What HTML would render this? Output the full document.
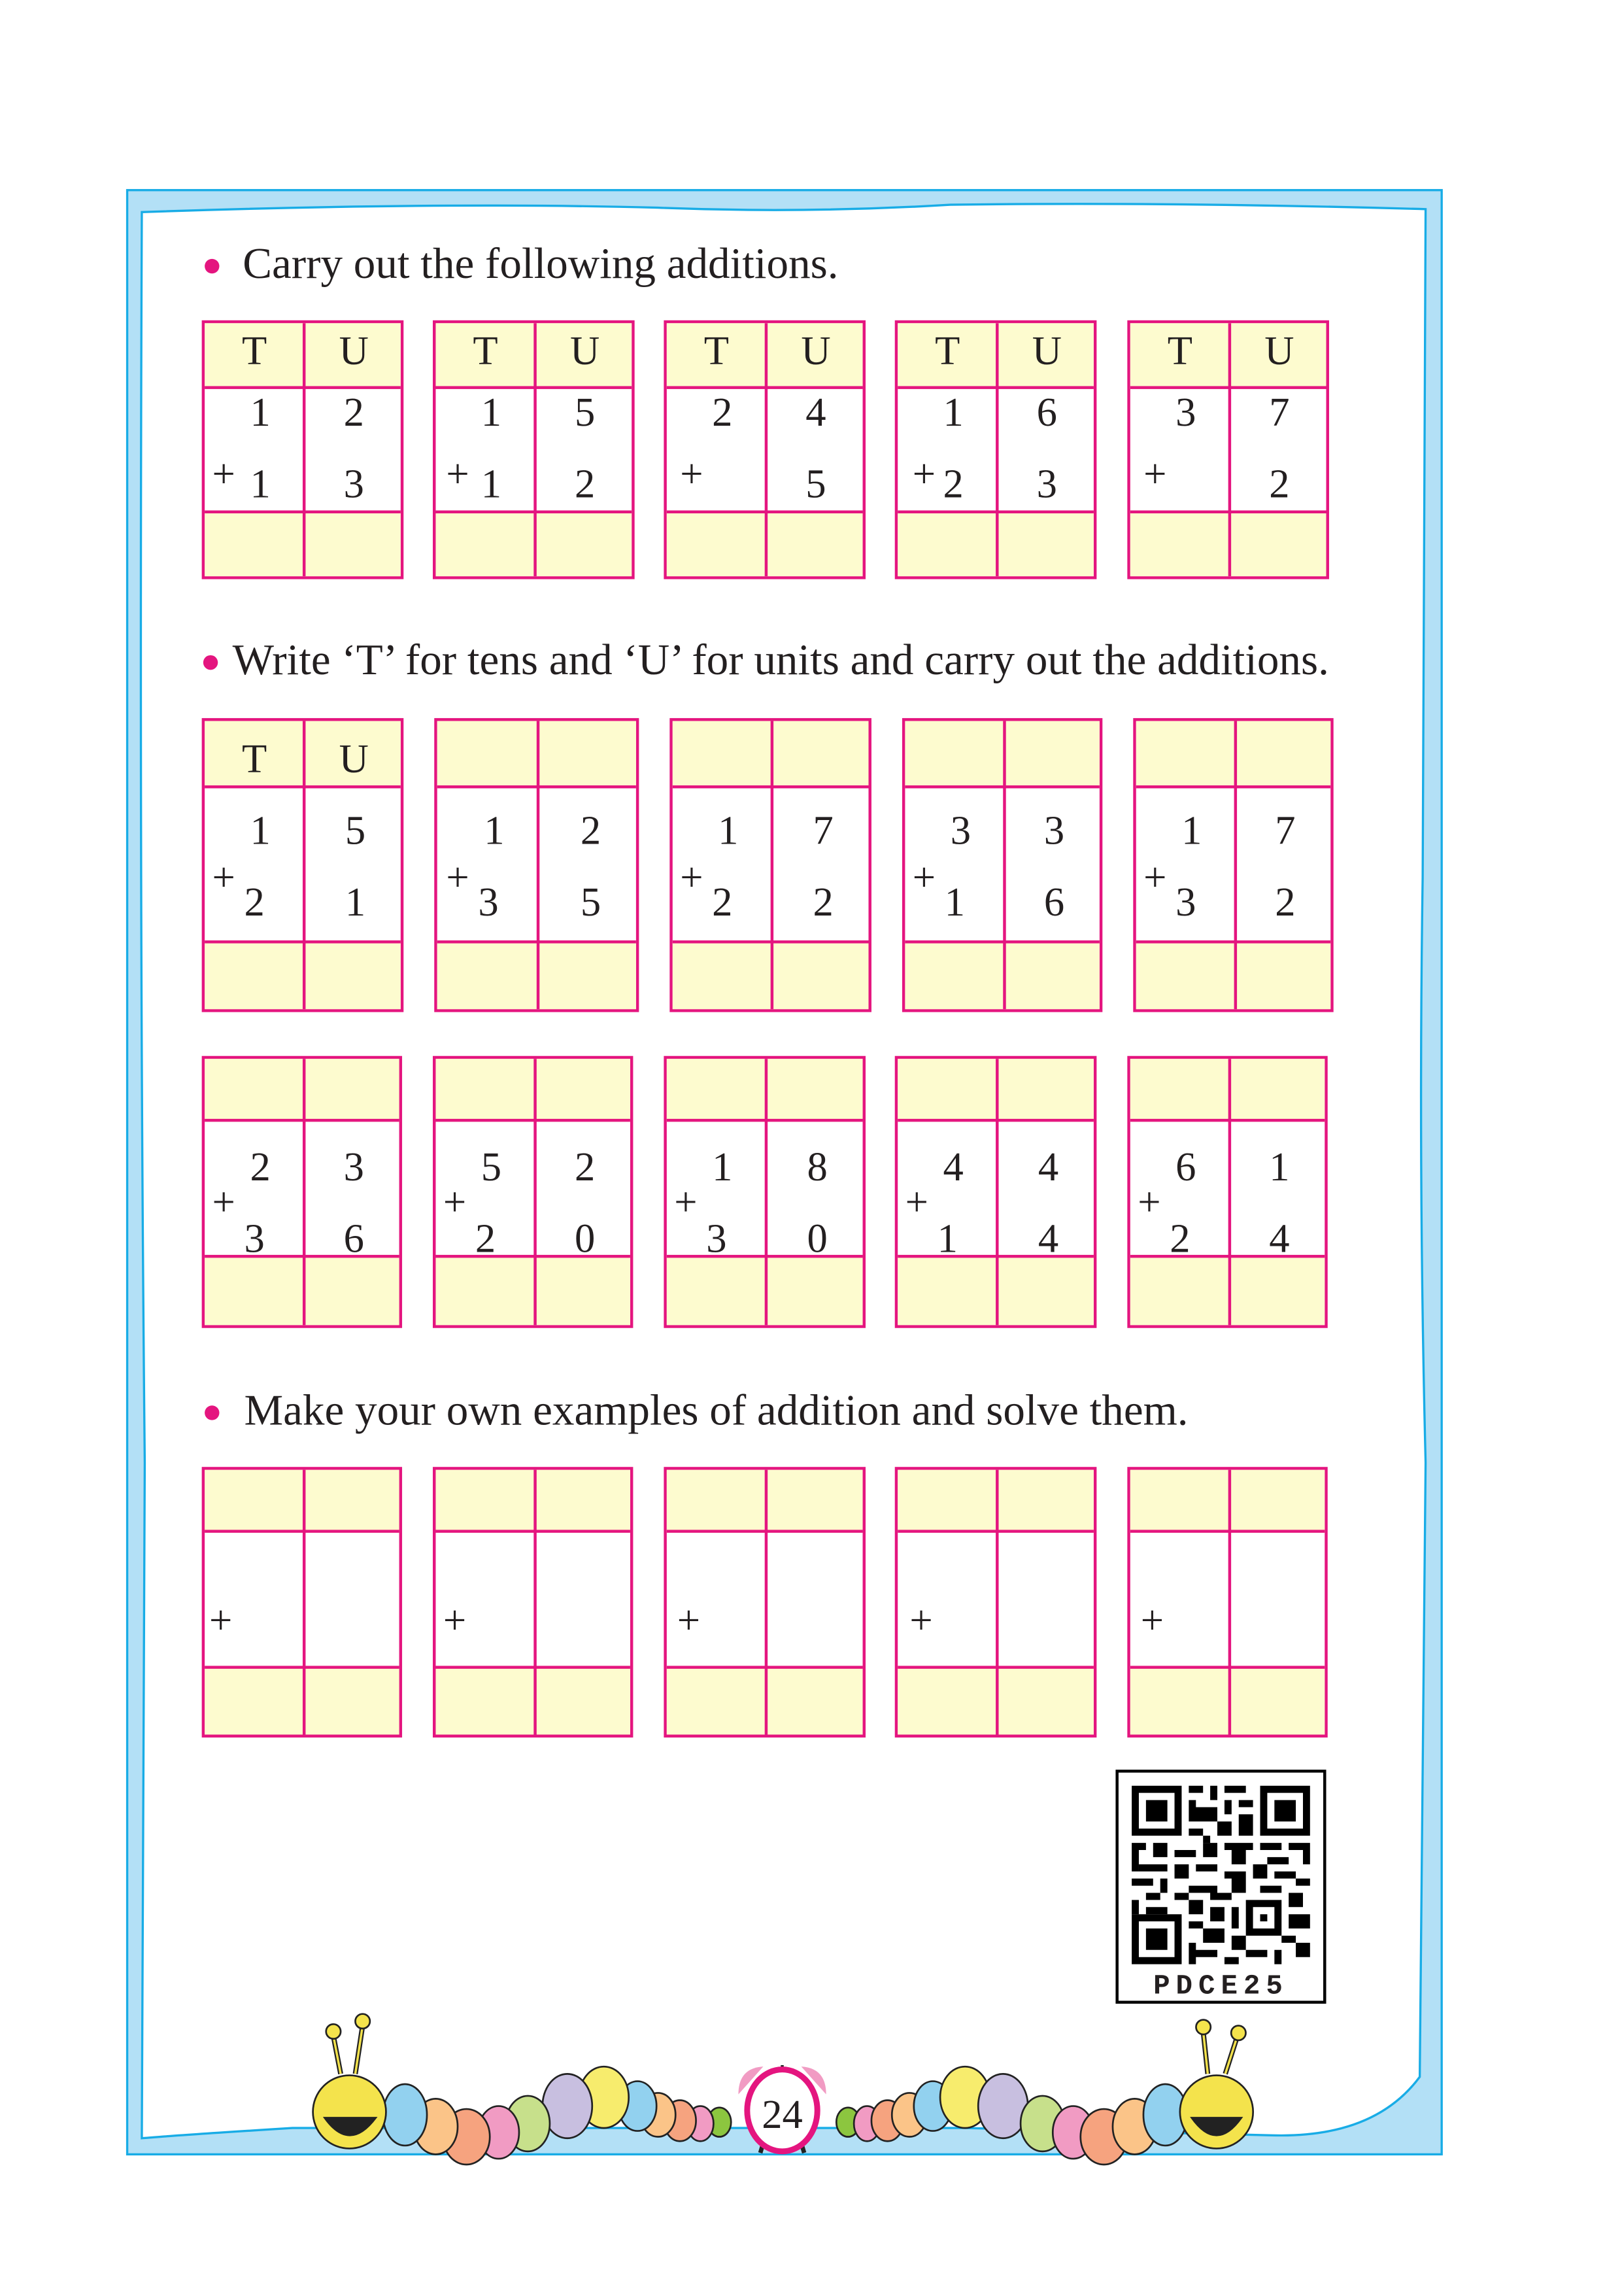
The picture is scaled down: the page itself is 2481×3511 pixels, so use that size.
<!DOCTYPE html>
<html><head><meta charset="utf-8"><style>
html,body{margin:0;padding:0;background:#fff;}
body{width:2481px;height:3508px;overflow:hidden;position:relative;}
#w{position:absolute;left:0;top:0;width:1110px;height:1570px;transform:scale(2.2365,2.2365);transform-origin:0 0;font-family:"Liberation Serif",serif;color:#231f20;}
.tb{position:absolute;box-sizing:border-box;border:2.2px solid #e4157f;background:#fff;}
.hd{position:absolute;left:0;right:0;top:0;background:#fdfbcf;border-bottom:2.2px solid #e4157f;}
.ft{position:absolute;left:0;right:0;bottom:0;background:#fdfbcf;border-top:2.2px solid #e4157f;}
.vl{position:absolute;left:50%;top:0;bottom:0;border-left:2.2px solid #e4157f;}
.n{position:absolute;font-size:28px;line-height:1;transform:translate(-50%,-50%);}
.p{position:absolute;font-size:28px;line-height:1;transform:translate(-50%,-50%);}
.b{position:absolute;width:10px;height:10px;border-radius:50%;background:#e4157f;}
.h{position:absolute;font-size:30px;line-height:1;white-space:nowrap;transform:translateY(-50%);}
</style></head><body><div id="w">

<svg style="position:absolute;left:0;top:0" width="1100" height="1556">
<rect x="87" y="130" width="899" height="1343" fill="#b3e0f6" stroke="#18ace6" stroke-width="1.5"/>
<path d="M97 145 Q300 138 450 142 Q550 146 650 140 Q800 138 975 143 L973 600 Q970 800 975 1000 L971 1420 Q940 1462 870 1460 L660 1455 L200 1455 Q120 1460 97 1462 L99 1000 Q95 600 97 145 Z" fill="#fff" stroke="#18ace6" stroke-width="1.5"/>
</svg>

<div class="b" style="left:140px;top:177px"></div>
<div class="h" style="left:166px;top:181px">Carry out the following additions.</div>
<div class="b" style="left:139px;top:448px"></div>
<div class="h" style="left:159px;top:452px">Write ‘T’ for tens and ‘U’ for units and carry out the additions.</div>
<div class="b" style="left:140px;top:961px"></div>
<div class="h" style="left:167px;top:965px">Make your own examples of addition and solve them.</div>

<!-- Row 1 -->
<div class="tb" style="left:138px;top:219px;width:138px;height:177px"><div class="hd" style="height:43px"></div><div class="ft" style="height:43px"></div><div class="vl"></div>
<span class="n" style="left:34px;top:20px">T</span><span class="n" style="left:102px;top:20px">U</span>
<span class="n" style="left:38px;top:62px">1</span><span class="n" style="left:102px;top:62px">2</span>
<span class="p" style="left:13px;top:104px">+</span><span class="n" style="left:38px;top:111px">1</span><span class="n" style="left:102px;top:111px">3</span></div>
<div class="tb" style="left:296px;top:219px;width:138px;height:177px"><div class="hd" style="height:43px"></div><div class="ft" style="height:43px"></div><div class="vl"></div>
<span class="n" style="left:34px;top:20px">T</span><span class="n" style="left:102px;top:20px">U</span>
<span class="n" style="left:38px;top:62px">1</span><span class="n" style="left:102px;top:62px">5</span>
<span class="p" style="left:15px;top:104px">+</span><span class="n" style="left:38px;top:111px">1</span><span class="n" style="left:102px;top:111px">2</span></div>
<div class="tb" style="left:454px;top:219px;width:138px;height:177px"><div class="hd" style="height:43px"></div><div class="ft" style="height:43px"></div><div class="vl"></div>
<span class="n" style="left:34px;top:20px">T</span><span class="n" style="left:102px;top:20px">U</span>
<span class="n" style="left:38px;top:62px">2</span><span class="n" style="left:102px;top:62px">4</span>
<span class="p" style="left:17px;top:104px">+</span><span class="n" style="left:102px;top:111px">5</span></div>
<div class="tb" style="left:612px;top:219px;width:138px;height:177px"><div class="hd" style="height:43px"></div><div class="ft" style="height:43px"></div><div class="vl"></div>
<span class="n" style="left:34px;top:20px">T</span><span class="n" style="left:102px;top:20px">U</span>
<span class="n" style="left:38px;top:62px">1</span><span class="n" style="left:102px;top:62px">6</span>
<span class="p" style="left:18px;top:104px">+</span><span class="n" style="left:38px;top:111px">2</span><span class="n" style="left:102px;top:111px">3</span></div>
<div class="tb" style="left:771px;top:219px;width:138px;height:177px"><div class="hd" style="height:43px"></div><div class="ft" style="height:43px"></div><div class="vl"></div>
<span class="n" style="left:34px;top:20px">T</span><span class="n" style="left:102px;top:20px">U</span>
<span class="n" style="left:38px;top:62px">3</span><span class="n" style="left:102px;top:62px">7</span>
<span class="p" style="left:17px;top:104px">+</span><span class="n" style="left:102px;top:111px">2</span></div>

<!-- Row 2 -->
<div class="tb" style="left:138px;top:491px;width:138px;height:201px"><div class="hd" style="height:44px"></div><div class="ft" style="height:45px"></div><div class="vl"></div>
<span class="n" style="left:34px;top:27px">T</span><span class="n" style="left:102px;top:27px">U</span>
<span class="n" style="left:38px;top:76px">1</span><span class="n" style="left:103px;top:76px">5</span>
<span class="p" style="left:13px;top:108px">+</span><span class="n" style="left:34px;top:125px">2</span><span class="n" style="left:103px;top:125px">1</span></div>
<div class="tb" style="left:297px;top:491px;width:140px;height:201px"><div class="hd" style="height:44px"></div><div class="ft" style="height:45px"></div><div class="vl"></div>
<span class="n" style="left:39px;top:76px">1</span><span class="n" style="left:105px;top:76px">2</span>
<span class="p" style="left:14px;top:108px">+</span><span class="n" style="left:35px;top:125px">3</span><span class="n" style="left:105px;top:125px">5</span></div>
<div class="tb" style="left:458px;top:491px;width:138px;height:201px"><div class="hd" style="height:44px"></div><div class="ft" style="height:45px"></div><div class="vl"></div>
<span class="n" style="left:38px;top:76px">1</span><span class="n" style="left:103px;top:76px">7</span>
<span class="p" style="left:13px;top:108px">+</span><span class="n" style="left:34px;top:125px">2</span><span class="n" style="left:103px;top:125px">2</span></div>
<div class="tb" style="left:617px;top:491px;width:137px;height:201px"><div class="hd" style="height:44px"></div><div class="ft" style="height:45px"></div><div class="vl"></div>
<span class="n" style="left:38px;top:76px">3</span><span class="n" style="left:102px;top:76px">3</span>
<span class="p" style="left:13px;top:108px">+</span><span class="n" style="left:34px;top:125px">1</span><span class="n" style="left:102px;top:125px">6</span></div>
<div class="tb" style="left:775px;top:491px;width:137px;height:201px"><div class="hd" style="height:44px"></div><div class="ft" style="height:45px"></div><div class="vl"></div>
<span class="n" style="left:38px;top:76px">1</span><span class="n" style="left:102px;top:76px">7</span>
<span class="p" style="left:13px;top:108px">+</span><span class="n" style="left:34px;top:125px">3</span><span class="n" style="left:102px;top:125px">2</span></div>

<!-- Row 3 -->
<div class="tb" style="left:138px;top:722px;width:137px;height:186px"><div class="hd" style="height:41px"></div><div class="ft" style="height:46px"></div><div class="vl"></div>
<span class="n" style="left:38px;top:75px">2</span><span class="n" style="left:102px;top:75px">3</span>
<span class="p" style="left:13px;top:99px">+</span><span class="n" style="left:34px;top:124px">3</span><span class="n" style="left:102px;top:124px">6</span></div>
<div class="tb" style="left:296px;top:722px;width:137px;height:186px"><div class="hd" style="height:41px"></div><div class="ft" style="height:46px"></div><div class="vl"></div>
<span class="n" style="left:38px;top:75px">5</span><span class="n" style="left:102px;top:75px">2</span>
<span class="p" style="left:13px;top:99px">+</span><span class="n" style="left:34px;top:124px">2</span><span class="n" style="left:102px;top:124px">0</span></div>
<div class="tb" style="left:454px;top:722px;width:138px;height:186px"><div class="hd" style="height:41px"></div><div class="ft" style="height:46px"></div><div class="vl"></div>
<span class="n" style="left:38px;top:75px">1</span><span class="n" style="left:103px;top:75px">8</span>
<span class="p" style="left:13px;top:99px">+</span><span class="n" style="left:34px;top:124px">3</span><span class="n" style="left:103px;top:124px">0</span></div>
<div class="tb" style="left:612px;top:722px;width:138px;height:186px"><div class="hd" style="height:41px"></div><div class="ft" style="height:46px"></div><div class="vl"></div>
<span class="n" style="left:38px;top:75px">4</span><span class="n" style="left:103px;top:75px">4</span>
<span class="p" style="left:13px;top:99px">+</span><span class="n" style="left:34px;top:124px">1</span><span class="n" style="left:103px;top:124px">4</span></div>
<div class="tb" style="left:771px;top:722px;width:137px;height:186px"><div class="hd" style="height:41px"></div><div class="ft" style="height:46px"></div><div class="vl"></div>
<span class="n" style="left:38px;top:75px">6</span><span class="n" style="left:102px;top:75px">1</span>
<span class="p" style="left:13px;top:99px">+</span><span class="n" style="left:34px;top:124px">2</span><span class="n" style="left:102px;top:124px">4</span></div>

<!-- Row 4 -->
<div class="tb" style="left:138px;top:1003px;width:137px;height:185px"><div class="hd" style="height:41px"></div><div class="ft" style="height:45px"></div><div class="vl"></div><span class="p" style="left:11px;top:104px">+</span></div>
<div class="tb" style="left:296px;top:1003px;width:137px;height:185px"><div class="hd" style="height:41px"></div><div class="ft" style="height:45px"></div><div class="vl"></div><span class="p" style="left:13px;top:104px">+</span></div>
<div class="tb" style="left:454px;top:1003px;width:138px;height:185px"><div class="hd" style="height:41px"></div><div class="ft" style="height:45px"></div><div class="vl"></div><span class="p" style="left:15px;top:104px">+</span></div>
<div class="tb" style="left:612px;top:1003px;width:138px;height:185px"><div class="hd" style="height:41px"></div><div class="ft" style="height:45px"></div><div class="vl"></div><span class="p" style="left:16px;top:104px">+</span></div>
<div class="tb" style="left:771px;top:1003px;width:137px;height:185px"><div class="hd" style="height:41px"></div><div class="ft" style="height:45px"></div><div class="vl"></div><span class="p" style="left:15px;top:104px">+</span></div>

<!-- QR -->
<div style="position:absolute;left:763px;top:1210px;width:144px;height:160px;box-sizing:border-box;border:2px solid #000;background:#fff"></div>
<svg style="position:absolute;left:774px;top:1220px" width="122" height="124" viewBox="0 0 25 25">
<g fill="#000">
<path d="M0 0h7v7h-7zM1 1v5h5v-5zM2 2h3v3h-3z" fill-rule="evenodd"/>
<path d="M18 0h7v7h-7zM19 1v5h5v-5zM20 2h3v3h-3z" fill-rule="evenodd"/>
<path d="M0 18h7v7h-7zM1 19v5h5v-5zM2 20h3v3h-3z" fill-rule="evenodd"/>
<path d="M16 16h5v5h-5zM17 17v3h3v-3zM18 18h1v1h-1z" fill-rule="evenodd"/>
<path d="M8 0h2v1h-2zM11 0h1v2h-1zM13 0h3v1h-3zM8 2h1v3h-1zM9 3h3v2h-3zM13 2h1v2h-1zM15 2h2v1h-2zM12 5h2v2h-2zM15 4h2v3h-2zM8 6h2v1h-2zM10 7h1v1h-1z"/>
<path d="M0 8h2v1h-2zM0 9h1v3h-1zM3 8h2v2h-2zM6 9h3v1h-3zM10 8h2v2h-2zM13 8h4v1h-4zM14 9h2v2h-2zM18 8h3v1h-3zM22 8h3v1h-3zM24 9h1v2h-1zM19 10h3v1h-3z"/>
<path d="M1 11h4v1h-4zM6 11h2v2h-2zM9 11h3v1h-3zM13 12h3v1h-3zM17 11h2v2h-2zM20 12h3v1h-3zM0 13h3v1h-3zM4 13h1v2h-1zM8 14h4v1h-4zM14 13h2v2h-2zM18 14h3v1h-3zM23 13h2v1h-2zM2 15h2v1h-2zM6 15h2v1h-2zM11 15h3v1h-3zM22 15h2v2h-2z"/>
<path d="M0 16h1v2h-1zM2 17h3v1h-3zM8 16h2v2h-2zM11 17h2v2h-2zM14 17h1v3h-1zM22 18h3v2h-3zM8 19h2v1h-2zM10 20h3v2h-3zM8 22h1v3h-1zM9 23h3v1h-3zM14 21h2v2h-2zM16 23h3v1h-3zM21 21h2v1h-2zM23 22h2v2h-2zM20 23h1v2h-1zM13 24h2v1h-2z"/>
</g></svg>
<div style="position:absolute;left:763px;top:1346px;width:144px;text-align:center;font-family:'Liberation Mono',monospace;font-weight:bold;font-size:19px;letter-spacing:4px;line-height:24px">PDCE25</div>

<!-- caterpillars & clock -->
<svg style="position:absolute;left:0;top:0" width="1100" height="1556">
<g stroke="#222" stroke-width="1.2">
<ellipse cx="492" cy="1451" rx="8" ry="10" fill="#8cc63f"/>
<ellipse cx="479" cy="1452" rx="9" ry="12" fill="#f19bc3"/>
<ellipse cx="465" cy="1450" rx="11" ry="14" fill="#f6a37f"/>
<ellipse cx="450" cy="1446" rx="12" ry="15" fill="#fbc488"/>
<ellipse cx="436" cy="1440" rx="13" ry="17" fill="#92d1ef"/>
<ellipse cx="413" cy="1434" rx="17" ry="21" fill="#f7ec6d"/>
<ellipse cx="388" cy="1440" rx="17" ry="22" fill="#c8bfe0"/>
<ellipse cx="361" cy="1452" rx="15" ry="19" fill="#c7e08b"/>
<ellipse cx="341" cy="1458" rx="14" ry="18" fill="#f19bc3"/>
<ellipse cx="319" cy="1461" rx="16" ry="19" fill="#f6a37f"/>
<ellipse cx="298" cy="1454" rx="15" ry="19" fill="#fbc488"/>
<ellipse cx="277" cy="1446" rx="15" ry="21" fill="#92d1ef"/>
<path d="M233 1418 L228 1392 M243 1418 L248 1385" stroke="#222" stroke-width="3.5" fill="none"/>
<path d="M233 1418 L228 1392 M243 1418 L248 1385" stroke="#f4e34c" stroke-width="1.5" fill="none"/>
<circle cx="228" cy="1389" r="5" fill="#f4e34c"/><circle cx="248" cy="1382" r="5" fill="#f4e34c"/>
<ellipse cx="239" cy="1444" rx="25" ry="25" fill="#f4e34c"/>
<path d="M222 1448 Q239 1472 257 1448 Z" fill="#222"/>
<ellipse cx="580" cy="1451" rx="8" ry="10" fill="#8cc63f"/>
<ellipse cx="593" cy="1452" rx="9" ry="12" fill="#f19bc3"/>
<ellipse cx="607" cy="1450" rx="11" ry="14" fill="#f6a37f"/>
<ellipse cx="622" cy="1446" rx="12" ry="15" fill="#fbc488"/>
<ellipse cx="638" cy="1440" rx="13" ry="17" fill="#92d1ef"/>
<ellipse cx="660" cy="1434" rx="17" ry="21" fill="#f7ec6d"/>
<ellipse cx="686" cy="1440" rx="17" ry="22" fill="#c8bfe0"/>
<ellipse cx="713" cy="1452" rx="15" ry="19" fill="#c7e08b"/>
<ellipse cx="734" cy="1458" rx="14" ry="18" fill="#f19bc3"/>
<ellipse cx="755" cy="1461" rx="16" ry="19" fill="#f6a37f"/>
<ellipse cx="776" cy="1454" rx="15" ry="19" fill="#fbc488"/>
<ellipse cx="797" cy="1446" rx="15" ry="21" fill="#92d1ef"/>
<path d="M826 1418 L823 1390 M838 1418 L846 1393" stroke="#222" stroke-width="3.5" fill="none"/>
<path d="M826 1418 L823 1390 M838 1418 L846 1393" stroke="#f4e34c" stroke-width="1.5" fill="none"/>
<circle cx="823" cy="1386" r="5" fill="#f4e34c"/><circle cx="847" cy="1390" r="5" fill="#f4e34c"/>
<ellipse cx="832" cy="1444" rx="25" ry="25" fill="#f4e34c"/>
<path d="M815 1448 Q832 1472 849 1448 Z" fill="#222"/>
</g>
<path d="M505 1432 Q505 1414 522 1413 Z" fill="#f19bc3"/>
<path d="M565 1432 Q565 1414 548 1413 Z" fill="#f19bc3"/>
<line x1="535" y1="1412" x2="535" y2="1419" stroke="#222" stroke-width="2"/>
<line x1="523" y1="1462" x2="520" y2="1472" stroke="#222" stroke-width="3"/>
<line x1="547" y1="1462" x2="550" y2="1472" stroke="#222" stroke-width="3"/>
<ellipse cx="535" cy="1443" rx="24" ry="28" fill="#fff" stroke="#e4157f" stroke-width="4"/>
<text x="535" y="1455" text-anchor="middle" font-family="Liberation Serif" font-size="28" fill="#231f20">24</text>
</svg>

</div></body></html>
